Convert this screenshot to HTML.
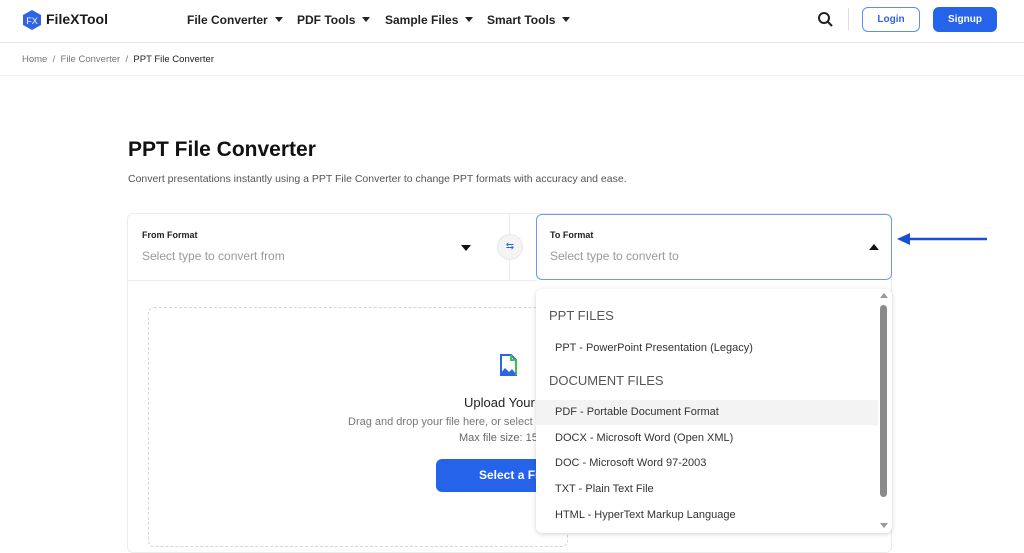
<!DOCTYPE html>
<html><head><meta charset="utf-8"><style>
*{box-sizing:border-box;margin:0;padding:0}
body{width:1024px;height:537px;overflow:hidden;background:#fff;font-family:"Liberation Sans",sans-serif;color:#1a1a1a;position:relative}
.a{position:absolute;white-space:nowrap}
.nav{font-size:12px;font-weight:bold;color:#222}
.car{display:inline-block;width:0;height:0;border-left:4px solid transparent;border-right:4px solid transparent;border-top:5px solid #222;margin-left:7px;vertical-align:2px}
.it{position:absolute;left:19px;font-size:11px;color:#333;white-space:nowrap}
</style></head><body>
<div class="a" style="left:0;top:42px;width:1024px;height:1px;background:#e6e6e6"></div>
<div class="a" style="left:0;top:75px;width:1024px;height:1px;background:#f0f0f0"></div>
<svg class="a" style="left:22px;top:10px" width="20" height="20" viewBox="0 0 20 20"><polygon points="10,0 19,5 19,15 10,20 1,15 1,5" fill="#2f64e6"/><text x="10" y="14" font-size="9" fill="#fff" text-anchor="middle" font-family="Liberation Sans">FX</text></svg>
<div class="a" style="left:46px;top:11px;font-size:14px;font-weight:bold">FileXTool</div>
<div class="a nav" style="left:187px;top:13px">File Converter<span class="car"></span></div>
<div class="a nav" style="left:297px;top:13px">PDF Tools<span class="car"></span></div>
<div class="a nav" style="left:385px;top:13px">Sample Files<span class="car"></span></div>
<div class="a nav" style="left:487px;top:13px">Smart Tools<span class="car"></span></div>
<svg class="a" style="left:817px;top:11px" width="17" height="17" viewBox="0 0 17 17"><circle cx="7" cy="7" r="5" fill="none" stroke="#222" stroke-width="2"/><line x1="11" y1="11" x2="15" y2="15" stroke="#222" stroke-width="2"/></svg>
<div class="a" style="left:848px;top:8px;width:1px;height:22px;background:#ddd"></div>
<div class="a" style="left:862px;top:7px;width:58px;height:25px;border:1px solid #5b8ef0;border-radius:6px;color:#2f64e6;font-size:10px;font-weight:bold;text-align:center;line-height:23px">Login</div>
<div class="a" style="left:933px;top:7px;width:64px;height:25px;background:#2563eb;border-radius:6px;color:#fff;font-size:10px;font-weight:bold;text-align:center;line-height:25px">Signup</div>
<div class="a" style="left:22px;top:54px;font-size:9.5px;color:#777">Home &nbsp;/&nbsp; File Converter &nbsp;/&nbsp; <span style="color:#222">PPT File Converter</span></div>
<div class="a" style="left:128px;top:138px;font-size:21px;font-weight:bold;color:#111">PPT File Converter</div>
<div class="a" style="left:128px;top:173px;font-size:10.5px;color:#555">Convert presentations instantly using a PPT File Converter to change PPT formats with accuracy and ease.</div>
<div class="a" style="left:127px;top:213px;width:765px;height:340px;border:1px solid #ececec;border-radius:6px"></div>
<div class="a" style="left:127px;top:280px;width:410px;height:1px;background:#ececec"></div>
<div class="a" style="left:509px;top:214px;width:1px;height:66px;background:#ececec"></div>
<div class="a" style="left:142px;top:230px;font-size:9px;font-weight:bold;color:#222">From Format</div>
<div class="a" style="left:142px;top:249px;font-size:12px;color:#999">Select type to convert from</div>
<div class="a" style="left:461px;top:245px;border-left:5px solid transparent;border-right:5px solid transparent;border-top:6px solid #111"></div>
<div class="a" style="left:497px;top:234px;width:26px;height:26px;border-radius:50%;background:#f4f4f4;border:1px solid #e8e8e8;font-size:10px;text-align:center;line-height:24px;color:#2f64e6">⇆</div>
<div class="a" style="left:536px;top:214px;width:356px;height:66px;border:1px solid #6b9af0;border-radius:6px;background:#fff"></div>
<div class="a" style="left:550px;top:230px;font-size:9px;font-weight:bold;color:#222">To Format</div>
<div class="a" style="left:550px;top:249px;font-size:12px;color:#999">Select type to convert to</div>
<div class="a" style="left:869px;top:244px;border-left:5px solid transparent;border-right:5px solid transparent;border-bottom:6px solid #111"></div>
<svg class="a" style="left:895px;top:231px" width="94" height="16"><line x1="12" y1="8" x2="92" y2="8" stroke="#1a4fd6" stroke-width="2.5"/><polygon points="2,8 15,2 15,14" fill="#1a4fd6"/></svg>
<div class="a" style="left:148px;top:307px;width:420px;height:240px;border:1.5px dashed #d6d6d6;border-radius:6px"></div>
<svg class="a" style="left:497px;top:353px" width="24" height="24" viewBox="0 0 24 24"><path d="M4 2h10l5 5v15H4z" fill="none" stroke="#2f64e6" stroke-width="2"/><path d="M14 2v5h5M19 7v15" fill="none" stroke="#3cc24a" stroke-width="2"/><path d="M3 21l5-6 4 4 3-3 4 5z" fill="#2f64e6"/></svg>
<div class="a" style="left:464px;top:395px;font-size:13px;color:#222">Upload Your</div>
<div class="a" style="left:348px;top:416px;font-size:11px;color:#777">Drag and drop your file here, or select</div>
<div class="a" style="left:459px;top:432px;font-size:11px;color:#666">Max file size: 15</div>
<div class="a" style="left:436px;top:459px;width:110px;height:33px;background:#2563eb;border-radius:6px;color:#fff;font-size:12px;font-weight:bold;line-height:33px;padding-left:43px;overflow:hidden">Select a File</div>
<div class="a" style="left:536px;top:289px;width:356px;height:244px;background:#fff;border-radius:6px;box-shadow:0 1px 5px rgba(0,0,0,.18)">
<div class="a" style="left:13px;top:19px;font-size:13px;color:#555">PPT FILES</div>
<div class="it" style="top:53px">PPT - PowerPoint Presentation (Legacy)</div>
<div class="a" style="left:13px;top:84px;font-size:13px;color:#555">DOCUMENT FILES</div>
<div class="a" style="left:0;top:111px;width:342px;height:25px;background:#f3f3f3"></div>
<div class="it" style="top:117px">PDF - Portable Document Format</div>
<div class="it" style="top:143px">DOCX - Microsoft Word (Open XML)</div>
<div class="it" style="top:168px">DOC - Microsoft Word 97-2003</div>
<div class="it" style="top:194px">TXT - Plain Text File</div>
<div class="it" style="top:220px">HTML - HyperText Markup Language</div>
<div class="a" style="left:344px;top:16px;width:7px;height:192px;background:#8a8a8a;border-radius:4px"></div>
<div class="a" style="left:344px;top:4px;border-left:4px solid transparent;border-right:4px solid transparent;border-bottom:5px solid #999"></div>
<div class="a" style="left:344px;top:234px;border-left:4px solid transparent;border-right:4px solid transparent;border-top:5px solid #999"></div>
</div>
</body></html>
